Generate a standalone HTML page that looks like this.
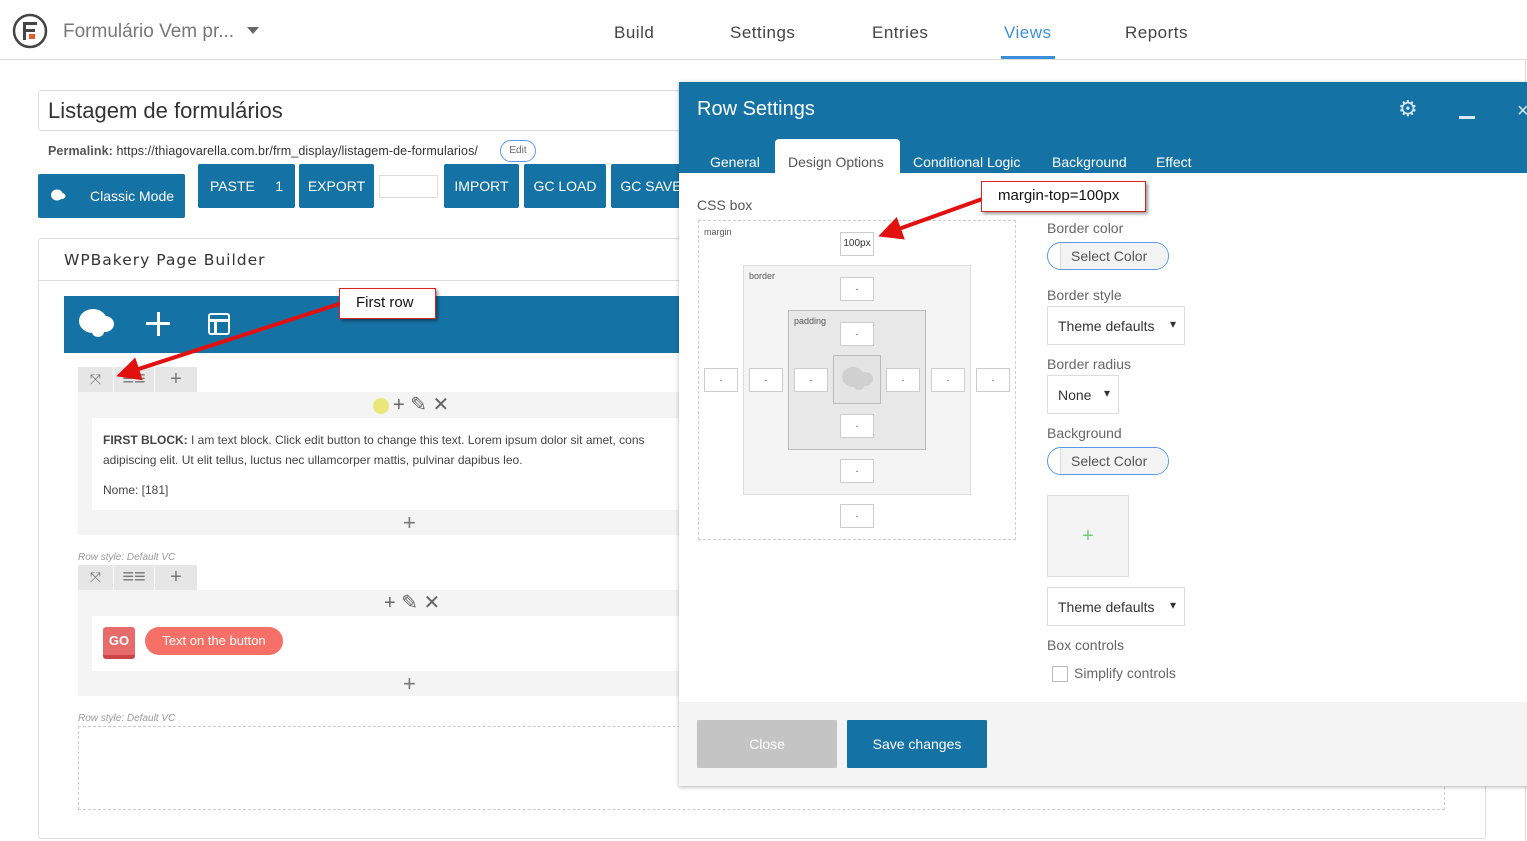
<!DOCTYPE html>
<html><head><meta charset="utf-8">
<style>
*{box-sizing:border-box;margin:0;padding:0}
body{width:1527px;height:841px;overflow:hidden;background:#fff;font-family:"Liberation Sans",sans-serif;position:relative;color:#444}
.a{position:absolute}
.nav{font-size:17px;color:#444;top:23px;letter-spacing:.5px}
.btn{position:absolute;background:#1572a5;color:#fff;font-size:14px;border-radius:2px;display:flex;align-items:center;justify-content:center}
.inp{position:absolute;width:34px;height:24px;border:1px solid #ccc;background:#fff;font-size:9px;color:#666;text-align:center;line-height:22px}
.lbl{position:absolute;font-size:14px;color:#666}
.sel{position:absolute;border:1px solid #ddd;background:#fff;font-size:14px;color:#333;padding:11px 10px}
.sel:after{content:"▾";position:absolute;right:8px;top:10px;font-size:12px}
.sc{position:absolute;width:122px;height:28px;border:1px solid #5b9ae8;border-radius:14px;background:#fff;overflow:hidden}
.sc span{position:absolute;left:12px;top:0;right:0;bottom:0;background:#f3f3f3;font-size:14px;color:#555;padding:5px 10px;border-left:1px solid #ddd}
.ctl{position:absolute;background:#e6e6e6;height:25px;color:#777;font-size:20px;text-align:center;line-height:24px}
.tb{font-size:14px;color:#fff;position:absolute;top:154px}
</style></head><body>
<svg class="a" style="left:12px;top:13px" width="36" height="36" viewBox="0 0 36 36"><circle cx="18" cy="18" r="16" fill="none" stroke="#444" stroke-width="2.5"/><rect x="11" y="9" width="14" height="3" fill="#444"/><rect x="11" y="9" width="3" height="18" fill="#444"/><rect x="11" y="16" width="12" height="3" fill="#444"/><rect x="17" y="21" width="6" height="5" fill="#f05a28"/></svg>
<div class="a" style="left:63px;top:21px;font-size:19px;color:#777">Formulário Vem pr...</div>
<div class="a" style="left:247px;top:27px;width:0;height:0;border-left:6px solid transparent;border-right:6px solid transparent;border-top:7px solid #666"></div>
<div class="a nav" style="left:614px">Build</div>
<div class="a nav" style="left:730px">Settings</div>
<div class="a nav" style="left:872px">Entries</div>
<div class="a nav" style="left:1004px;color:#3a8fd9">Views</div>
<div class="a" style="left:1001px;top:56px;width:54px;height:3px;background:#3a8fd9"></div>
<div class="a nav" style="left:1125px">Reports</div>
<div class="a" style="left:0;top:59px;width:1527px;height:1px;background:#ddd"></div>
<div class="a" style="left:1525px;top:59px;width:1px;height:782px;background:#ddd"></div>

<div class="a" style="left:38px;top:90px;width:660px;height:41px;border:1px solid #ddd;border-radius:3px;font-size:22px;color:#333;padding:7px 9px">Listagem de formulários</div>
<div class="a" style="left:48px;top:144px;font-size:12.5px;color:#333;letter-spacing:.1px"><b style="color:#555">Permalink:</b> https://thiagovarella.com.br/frm_display/listagem-de-formularios/</div>
<div class="a" style="left:500px;top:140px;width:36px;height:22px;border:1px solid #5b9ae8;border-radius:11px;font-size:10px;color:#666;text-align:center;line-height:20px">Edit</div>
<div class="btn" style="left:38px;top:174px;width:147px;height:44px;justify-content:flex-start;padding-left:52px"><svg class="a" style="left:12px;top:14px" width="16" height="14" viewBox="0 0 16 14"><ellipse cx="7" cy="7" rx="6" ry="5.5" fill="#fff"/><ellipse cx="12" cy="8" rx="3.5" ry="3" fill="#fff"/></svg>Classic Mode</div>
<div class="btn" style="left:198px;top:164px;width:97px;height:44px;justify-content:space-between;padding:0 12px">PASTE<span>1</span></div>
<div class="btn" style="left:299px;top:164px;width:75px;height:44px">EXPORT</div>
<div class="a" style="left:379px;top:175px;width:59px;height:23px;border:1px solid #ddd"></div>
<div class="btn" style="left:444px;top:164px;width:75px;height:44px">IMPORT</div>
<div class="btn" style="left:524px;top:164px;width:82px;height:44px">GC LOAD</div>
<div class="btn" style="left:611px;top:164px;width:80px;height:44px">GC SAVE</div>

<div class="a" style="left:38px;top:238px;width:1448px;height:601px;border:1px solid #ddd;border-radius:3px"></div>
<div class="a" style="left:64px;top:251px;color:#333;letter-spacing:1px;font-family:'DejaVu Sans',sans-serif;font-size:15.5px">WPBakery Page Builder</div>
<div class="a" style="left:39px;top:280px;width:650px;height:1px;background:#ddd"></div>
<div class="a" style="left:64px;top:296px;width:620px;height:57px;background:#1572a5"></div>
<svg class="a" style="left:78px;top:308px" width="38" height="30" viewBox="0 0 38 30"><ellipse cx="15" cy="13" rx="14" ry="12" fill="#fff"/><ellipse cx="27" cy="16" rx="9" ry="8" fill="#fff"/><ellipse cx="20" cy="24" rx="6" ry="5" fill="#fff"/></svg>
<div class="a" style="left:146px;top:322px;width:24px;height:3px;background:#fff"></div>
<div class="a" style="left:157px;top:312px;width:3px;height:24px;background:#fff"></div>
<div class="a" style="left:208px;top:313px;width:22px;height:22px;border:2.5px solid #fff;border-radius:3px"></div>
<div class="a" style="left:208px;top:319px;width:22px;height:2.5px;background:#fff"></div>
<div class="a" style="left:214px;top:319px;width:2.5px;height:15px;background:#fff"></div>

<div class="ctl" style="left:78px;top:367px;width:35px;font-size:14px">⤧</div>
<div class="ctl" style="left:114px;top:367px;width:40px">≡≡</div>
<div class="ctl" style="left:155px;top:367px;width:42px">+</div>
<div class="a" style="left:78px;top:392px;width:610px;height:143px;background:#f4f4f4"></div>
<div class="a" style="left:373px;top:398px;width:16px;height:16px;border-radius:50%;background:#eae67a"></div>
<div class="a" style="left:393px;top:392px;font-size:20px;color:#666">+ ✎ ✕</div>
<div class="a" style="left:92px;top:418px;width:596px;height:92px;background:#fff"></div>
<div class="a" style="left:103px;top:431px;font-size:12px;color:#444;line-height:19.5px;width:590px;white-space:nowrap"><b>FIRST BLOCK:</b> I am text block. Click edit button to change this text. Lorem ipsum dolor sit amet, cons<br>adipiscing elit. Ut elit tellus, luctus nec ullamcorper mattis, pulvinar dapibus leo.</div>
<div class="a" style="left:103px;top:483px;font-size:12px;color:#444">Nome: [181]</div>
<div class="a" style="left:403px;top:510px;font-size:22px;color:#777">+</div>

<div class="a" style="left:78px;top:552px;font-size:10px;color:#999;font-style:italic">Row style: Default VC</div>
<div class="ctl" style="left:78px;top:565px;width:35px;font-size:14px">⤧</div>
<div class="ctl" style="left:114px;top:565px;width:40px">≡≡</div>
<div class="ctl" style="left:155px;top:565px;width:42px">+</div>
<div class="a" style="left:78px;top:590px;width:610px;height:106px;background:#f4f4f4"></div>
<div class="a" style="left:384px;top:590px;font-size:20px;color:#666">+ ✎ ✕</div>
<div class="a" style="left:92px;top:616px;width:596px;height:55px;background:#fff"></div>
<div class="a" style="left:103px;top:627px;width:32px;height:32px;background:#e86b6b;border-radius:3px;border-bottom:4px solid #c44;color:#fff;font-weight:bold;font-size:13px;text-align:center;line-height:28px">GO</div>
<div class="a" style="left:145px;top:627px;width:138px;height:28px;background:#f77067;border-radius:14px;color:#fff;font-size:13px;text-align:center;line-height:28px">Text on the button</div>
<div class="a" style="left:403px;top:671px;font-size:22px;color:#777">+</div>

<div class="a" style="left:78px;top:713px;font-size:10px;color:#999;font-style:italic">Row style: Default VC</div>
<div class="a" style="left:78px;top:726px;width:1367px;height:84px;border:1px dashed #ccc"></div>

<div class="a" style="left:679px;top:82px;width:860px;height:704px;background:#fff;box-shadow:0 1px 4px rgba(0,0,0,.3)"></div>
<div class="a" style="left:679px;top:82px;width:860px;height:91px;background:#1572a5"></div>
<div class="a" style="left:697px;top:98px;font-size:20px;color:#fff">Row Settings</div>
<div class="a" style="left:1398px;top:96px;font-size:22px;color:#d7e8f3">⚙</div>
<div class="a" style="left:1459px;top:116px;width:16px;height:3px;background:#d7e8f3"></div>
<div class="a" style="left:1517px;top:100px;font-size:20px;color:#d7e8f3">×</div>
<div class="tb" style="left:710px">General</div>
<div class="a" style="left:775px;top:139px;width:125px;height:34px;background:#fff;border-radius:4px 4px 0 0"></div>
<div class="tb" style="left:788px;color:#555">Design Options</div>
<div class="tb" style="left:913px">Conditional Logic</div>
<div class="tb" style="left:1052px">Background</div>
<div class="tb" style="left:1156px">Effect</div>

<div class="a" style="left:697px;top:197px;font-size:14px;color:#555">CSS box</div>
<div class="a" style="left:698px;top:220px;width:318px;height:320px;border:1px dashed #ccc"></div>
<div class="a" style="left:704px;top:227px;font-size:9px;color:#555">margin</div>
<div class="a" style="left:743px;top:265px;width:228px;height:230px;background:#f4f4f4;border:1px solid #ddd"></div>
<div class="a" style="left:749px;top:271px;font-size:9px;color:#555">border</div>
<div class="a" style="left:788px;top:310px;width:138px;height:140px;background:#e8e8e8;border:1px solid #bbb"></div>
<div class="a" style="left:794px;top:316px;font-size:9px;color:#555">padding</div>
<div class="a" style="left:833px;top:355px;width:48px;height:49px;border:1px solid #bbb;background:#e4e4e4"></div>
<svg class="a" style="left:841px;top:366px" width="33" height="26" viewBox="0 0 33 26"><ellipse cx="12" cy="11" rx="11" ry="10" fill="#d0d0d0"/><ellipse cx="24" cy="13" rx="8" ry="7" fill="#d0d0d0"/><ellipse cx="18" cy="20" rx="5" ry="4" fill="#d0d0d0"/></svg>
<div class="inp" style="left:840px;top:232px;font-size:10px;color:#333">100px</div>
<div class="inp" style="left:840px;top:277px">-</div>
<div class="inp" style="left:840px;top:322px">-</div>
<div class="inp" style="left:840px;top:414px">-</div>
<div class="inp" style="left:840px;top:459px">-</div>
<div class="inp" style="left:840px;top:504px">-</div>
<div class="inp" style="left:704px;top:368px">-</div>
<div class="inp" style="left:749px;top:368px">-</div>
<div class="inp" style="left:794px;top:368px">-</div>
<div class="inp" style="left:886px;top:368px">-</div>
<div class="inp" style="left:931px;top:368px">-</div>
<div class="inp" style="left:976px;top:368px">-</div>

<div class="lbl" style="left:1047px;top:220px">Border color</div>
<div class="sc" style="left:1047px;top:242px"><span>Select Color</span></div>
<div class="lbl" style="left:1047px;top:287px">Border style</div>
<div class="sel" style="left:1047px;top:306px;width:138px;height:39px">Theme defaults</div>
<div class="lbl" style="left:1047px;top:356px">Border radius</div>
<div class="sel" style="left:1047px;top:375px;width:72px;height:39px">None</div>
<div class="lbl" style="left:1047px;top:425px">Background</div>
<div class="sc" style="left:1047px;top:447px"><span>Select Color</span></div>
<div class="a" style="left:1047px;top:495px;width:82px;height:82px;background:#f4f4f4;border:1px solid #ddd;color:#7c7;font-size:20px;text-align:center;line-height:80px">+</div>
<div class="sel" style="left:1047px;top:587px;width:138px;height:39px">Theme defaults</div>
<div class="lbl" style="left:1047px;top:637px">Box controls</div>
<div class="a" style="left:1052px;top:666px;width:16px;height:16px;border:1px solid #bbb"></div>
<div class="lbl" style="left:1074px;top:665px">Simplify controls</div>

<div class="a" style="left:679px;top:702px;width:848px;height:84px;background:#f4f4f4"></div>
<div class="btn" style="left:697px;top:720px;width:140px;height:48px;background:#c4c4c4;border-radius:1px">Close</div>
<div class="btn" style="left:847px;top:720px;width:140px;height:48px;border-radius:1px">Save changes</div>

<svg class="a" style="left:0;top:0" width="1527" height="841">
<defs><marker id="ar" markerWidth="6" markerHeight="6" refX="5" refY="3" orient="auto"><path d="M0,0 L6,3 L0,6z" fill="#e31010"/></marker></defs>
<line x1="342" y1="303" x2="120" y2="375" stroke="#e31010" stroke-width="4" marker-end="url(#ar)"/>
<line x1="985" y1="198" x2="882" y2="235" stroke="#e31010" stroke-width="4" marker-end="url(#ar)"/>
</svg>
<div class="a" style="left:339px;top:288px;width:97px;height:31px;background:#fff;border:1px solid #d22;box-shadow:2px 2px 3px rgba(0,0,0,.4);font-size:15px;color:#111;padding:5px 16px">First row</div>
<div class="a" style="left:981px;top:181px;width:165px;height:31px;background:#fff;border:1px solid #d22;box-shadow:2px 2px 3px rgba(0,0,0,.4);font-size:15px;color:#111;padding:5px 16px">margin-top=100px</div>
</body></html>
